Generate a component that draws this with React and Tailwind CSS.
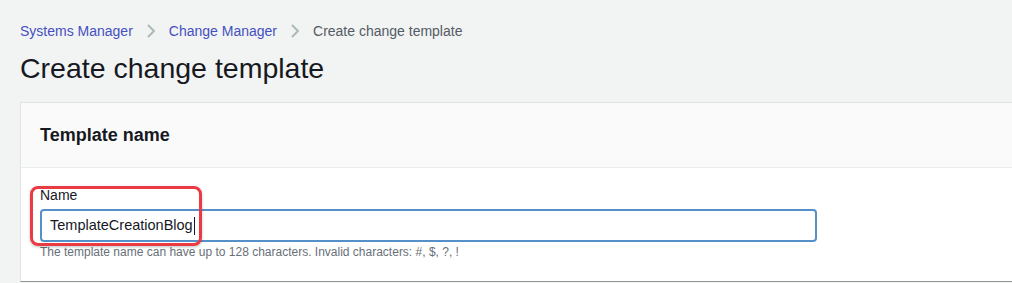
import React from "react";

const Chevron = () => (
  <svg width="10" height="16" viewBox="0 0 10 16" className="mx-[13px]">
    <path d="M2 2l6 6-6 6" fill="none" stroke="#aab7b8" strokeWidth="1.8" />
  </svg>
);

const App = () => {
  return (
    <div
      className="h-[283px] w-full overflow-hidden bg-[#f2f3f3]"
      style={{ fontFamily: '"Liberation Sans", Arial, sans-serif' }}
    >
      <nav className="flex items-center px-5 pt-[21px] text-[14px] leading-5">
        <span className="text-[#4450c2]">Systems Manager</span>
        <Chevron />
        <span className="text-[#4450c2]">Change Manager</span>
        <Chevron />
        <span className="text-[#545b64]">Create change template</span>
      </nav>
      <h1 className="mt-[9px] px-5 text-[28.5px] leading-9 text-[#16191f]">
        Create change template
      </h1>
      <div className="mt-4 ml-5 -mr-4 border-l border-t border-[#e1e4e4] border-b border-b-[#8d9797] bg-white">
        <div className="flex h-[65px] items-center border-b border-[#eaeded] bg-[#fafafa] px-[19px]">
          <h2 className="text-[18px] font-bold text-[#16191f]">Template name</h2>
        </div>
        <div className="px-[19px] pt-[17px] pb-[21px]">
          <div className="relative">
            <label className="block text-[14px] leading-5 text-[#16191f]">Name</label>
            <div className="mt-1 flex h-[33px] w-[777px] items-center rounded-sm border-2 border-[#5590c9] bg-white pl-[8px] text-[14.5px] text-[#16191f]">
              TemplateCreationBlog
              <span className="ml-[1px] inline-block h-[18px] w-px bg-[#16191f]" />
            </div>
            <p className="mt-[2px] text-[12px] leading-4 text-[#687078]">
              The template name can have up to 128 characters. Invalid characters: #, $, ?, !
            </p>
            <div className="pointer-events-none absolute left-[-10px] top-[1px] h-[60px] w-[172px] rounded-lg border-[3px] border-[#ea3b45] shadow-[0_1px_3px_rgba(0,0,0,0.25)]" />
          </div>
        </div>
      </div>
    </div>
  );
};

export default App;
